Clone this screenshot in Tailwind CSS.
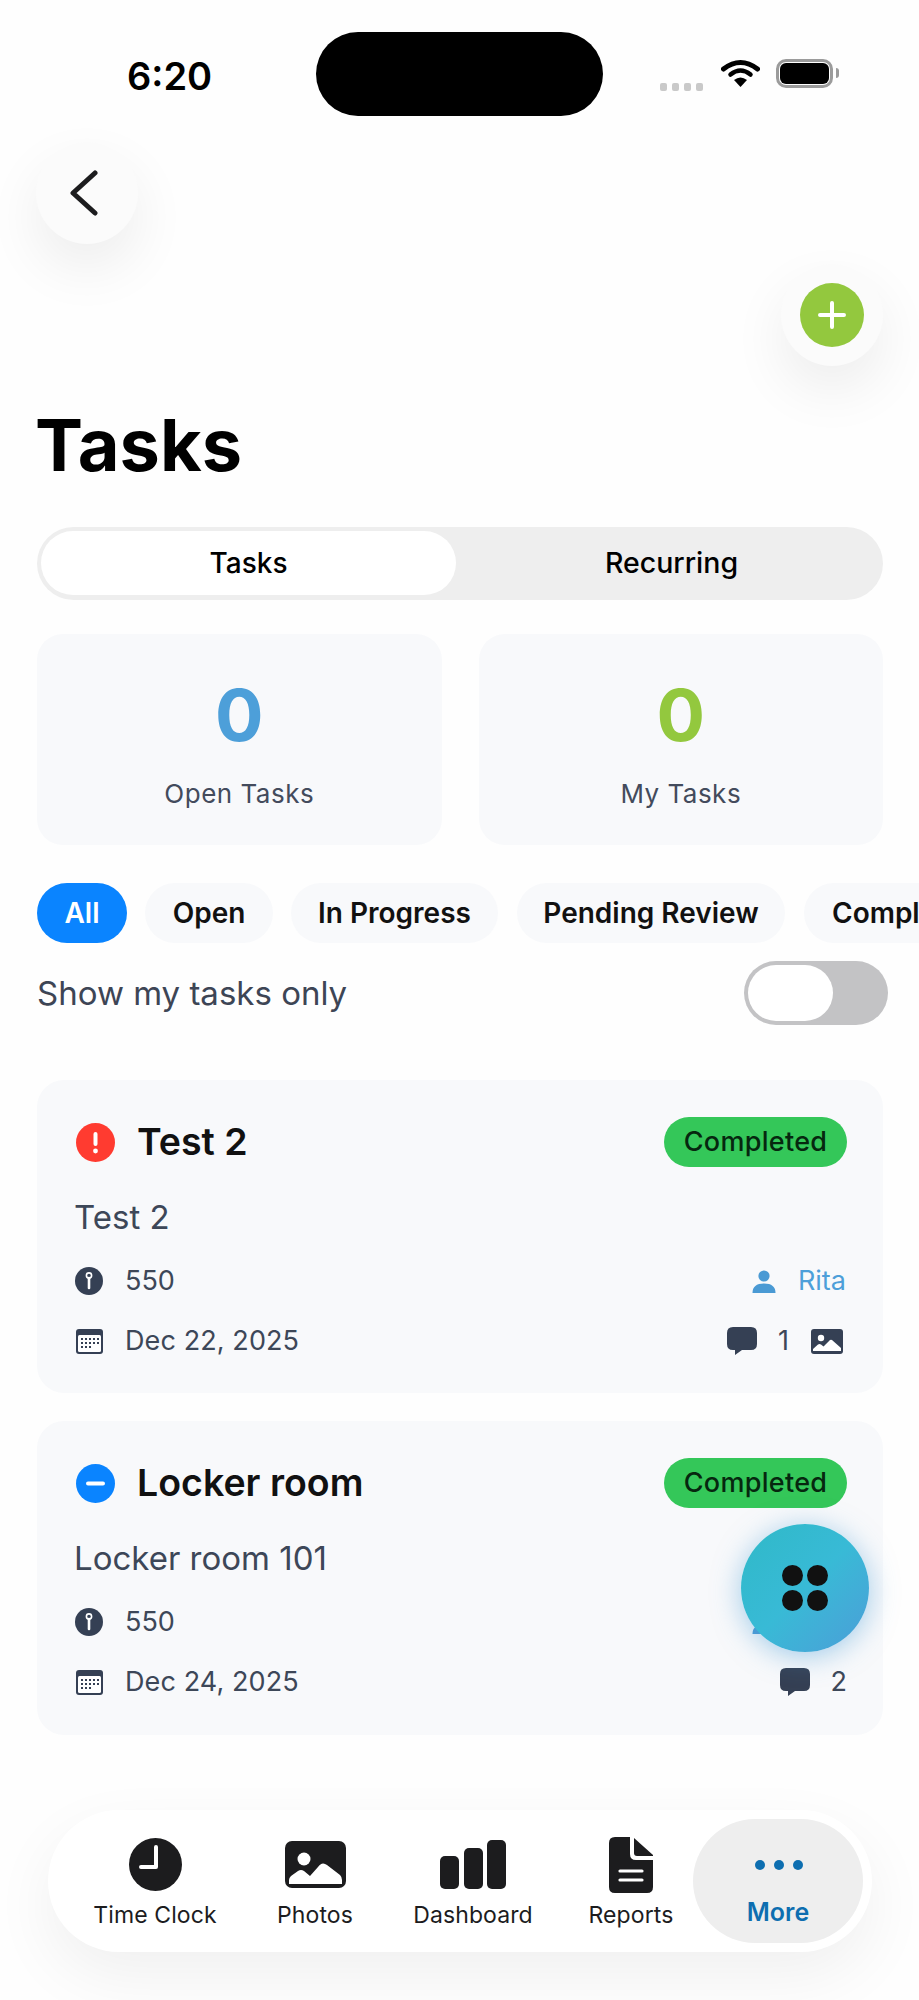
<!DOCTYPE html>
<html>
<head>
<meta charset="utf-8">
<script src="https://cdn.jsdelivr.net/npm/@tailwindcss/browser@4"></script>
</head>
<body class="bg-[#fefefe] font-['Inter','Liberation_Sans',sans-serif]">
<div class="relative w-[919px] h-[2000px] overflow-hidden">
  <!-- status bar -->
  <div class="flex items-center h-[84px] mt-[32px] pt-0">
    <div class="w-[316px] pl-[127px] text-[38px] font-semibold leading-none text-black pt-[3px]">6:20</div>
    <div class="w-[287px] h-[84px] rounded-[42px] bg-black"></div>
    <div class="flex items-center ml-[57px]">
      <div class="flex gap-[5px] mt-[26px]">
        <span class="w-[7px] h-[8px] rounded-[2px] bg-[#c9c9c9]"></span>
        <span class="w-[7px] h-[8px] rounded-[2px] bg-[#c9c9c9]"></span>
        <span class="w-[7px] h-[8px] rounded-[2px] bg-[#c9c9c9]"></span>
        <span class="w-[7px] h-[8px] rounded-[2px] bg-[#c9c9c9]"></span>
      </div>
      <svg class="ml-[18px] -mt-[2px]" width="39" height="28" viewBox="0 0 38 28" fill="none">
        <path d="M2 10 Q19 -3 36 10" stroke="#000" stroke-width="5" stroke-linecap="round"/>
        <path d="M9 15.5 Q19 7.5 29 15.5" stroke="#000" stroke-width="4.5" stroke-linecap="round"/>
        <path d="M12.5 21 Q19 16 25.5 21 L19 28Z" fill="#000"/>
      </svg>
      <div class="ml-[16px] -mt-[2px] w-[57px] h-[29px] rounded-[10px] border-[3px] border-[#9b9b9b] p-[1px] bg-white">
        <div class="w-full h-full rounded-[6px] bg-black"></div>
      </div>
      <span class="ml-[3px] -mt-[2px] w-[3px] h-[10px] rounded-r-[3px] bg-[#9b9b9b]"></span>
    </div>
  </div>

  <!-- back -->
  <div class="ml-[36px] mt-[26px] w-[102px] h-[102px] rounded-full bg-[#fbfbfb] shadow-[0_24px_56px_rgba(0,0,0,0.07)] flex items-center justify-center">
    <svg class="-ml-[6px]" width="28" height="46" viewBox="0 0 28 46" fill="none"><path d="M25 3 L3 23 L25 43" stroke="#1c1c1e" stroke-width="5" stroke-linecap="round" stroke-linejoin="round"/></svg>
  </div>

  <!-- plus -->
  <div class="flex justify-end mt-[20px] pr-[36px]">
    <div class="w-[102px] h-[102px] rounded-full bg-[#fbfbfb] shadow-[0_24px_56px_rgba(0,0,0,0.07)] flex items-center justify-center">
      <div class="w-[64px] h-[64px] rounded-full bg-[#93c83e] flex items-center justify-center">
        <svg width="32" height="32" viewBox="0 0 32 32" fill="none"><path d="M16 4 V28 M4 16 H28" stroke="#fff" stroke-width="4" stroke-linecap="round"/></svg>
      </div>
    </div>
  </div>

  <div class="pl-[37px] pr-[36px]">
    <h1 class="mt-[39px] -ml-[2px] text-[72px] leading-[80px] font-bold text-black">Tasks</h1>

    <!-- segment -->
    <div class="mt-[42px] h-[73px] rounded-[37px] bg-[#eeeeee] flex pt-[4px] pb-[5px] pl-[4px]">
      <div class="w-[415px] rounded-[32px] bg-white flex items-center justify-center text-[28px] font-medium text-black">Tasks</div>
      <div class="flex-1 flex items-center justify-center text-[28.5px] font-medium text-black pl-[4px]">Recurring</div>
    </div>

    <!-- stats -->
    <div class="mt-[34px] grid grid-cols-2 gap-[37px]">
      <div class="h-[211px] rounded-[26px] bg-[#f8f9fb] flex flex-col items-center pt-[43px]">
        <div class="text-[72px] leading-[76px] font-bold text-[#4d9fd9]">0</div>
        <div class="mt-[23px] text-[26px] leading-[36px] text-[#434b5c] tracking-[0.5px]">Open Tasks</div>
      </div>
      <div class="h-[211px] rounded-[26px] bg-[#f8f9fb] flex flex-col items-center pt-[43px]">
        <div class="text-[72px] leading-[76px] font-bold text-[#93c83e]">0</div>
        <div class="mt-[23px] text-[26px] leading-[36px] text-[#434b5c] tracking-[0.5px]">My Tasks</div>
      </div>
    </div>

    <!-- chips -->
    <div class="mt-[38px] flex gap-[18px] whitespace-nowrap w-[960px]">
      <div class="h-[60px] w-[90px] rounded-[30px] bg-[#0a84ff] text-white text-[28px] font-semibold flex items-center justify-center">All</div>
      <div class="h-[60px] w-[128px] rounded-[30px] bg-[#f8f9fb] text-[#111] text-[28px] font-semibold flex items-center justify-center">Open</div>
      <div class="h-[60px] w-[207px] rounded-[30px] bg-[#f8f9fb] text-[#111] text-[28px] font-semibold flex items-center justify-center">In Progress</div>
      <div class="ml-px h-[60px] w-[268px] rounded-[30px] bg-[#f8f9fb] text-[#111] text-[28px] font-semibold flex items-center justify-center">Pending Review</div>
      <div class="ml-px h-[60px] w-[190px] rounded-[30px] bg-[#f8f9fb] text-[#111] text-[28px] font-semibold flex items-center pl-[28px]">Completed</div>
    </div>

    <!-- toggle row -->
    <div class="mt-[18px] -mr-[5px] flex items-center justify-between h-[64px]">
      <span class="text-[33px] text-[#3d4555] mt-px">Show my tasks only</span>
      <div class="w-[144px] h-[64px] rounded-[32px] bg-[#c3c3c5] pl-[4px] py-[4px]">
        <div class="w-[85px] h-[56px] rounded-[28px] bg-white"></div>
      </div>
    </div>

    <!-- card 1 -->
    <div class="mt-[55px] h-[313px] rounded-[27px] bg-[#f8f9fb] pl-[38px] pr-[36px] pt-[37px]">
      <div class="flex items-center justify-between h-[50px]">
        <div class="flex items-center">
          <svg width="39" height="39" viewBox="0 0 39 39" class="ml-px"><circle cx="19.5" cy="19.5" r="19.5" fill="#ff3b30"/><rect x="17.5" y="9" width="4" height="14" rx="2" fill="#fff"/><circle cx="19.5" cy="28" r="2.4" fill="#fff"/></svg>
          <span class="ml-[22px] text-[37.5px] font-semibold text-[#111] mt-px">Test 2</span>
        </div>
        <div class="w-[183px] h-[50px] rounded-[25px] bg-[#34c759] flex items-center justify-center text-[27px] font-medium text-[#06270f] tracking-[0.3px]">Completed</div>
      </div>
      <div class="mt-[30px] -ml-px text-[33px] leading-[40px] text-[#3d4758]">Test 2</div>
      <div class="mt-[28px] flex items-center justify-between h-[32px]">
        <div class="flex items-center">
          <svg width="28" height="28" viewBox="0 0 28 28"><circle cx="14" cy="14" r="14" fill="#354054"/><circle cx="14" cy="8.5" r="2.6" fill="none" stroke="#fff" stroke-width="1.6"/><path d="M14 11 V21" stroke="#fff" stroke-width="2.6" stroke-linecap="round"/></svg>
          <span class="ml-[22px] text-[27px] text-[#3d4758]">550</span>
        </div>
        <div class="flex items-center mr-px">
          <svg width="24" height="24" viewBox="0 0 24 24"><circle cx="12" cy="7" r="5.6" fill="#4a9ad4"/><path d="M0.5 24 Q0.5 14.5 12 14.5 Q23.5 14.5 23.5 24Z" fill="#4a9ad4"/></svg>
          <span class="ml-[22px] text-[27px] text-[#4d9fd9]">Rita</span>
        </div>
      </div>
      <div class="mt-[28px] flex items-center justify-between h-[32px]">
        <div class="flex items-center">
          <svg width="27" height="25" viewBox="0 0 27 25" class="ml-px"><rect width="27" height="25" rx="3" fill="#354054"/><rect x="2" y="6" width="23" height="17" rx="1.5" fill="#fff"/><g fill="#354054"><rect x="5" y="9" width="2" height="2"/><rect x="9" y="9" width="2" height="2"/><rect x="13" y="9" width="2" height="2"/><rect x="17" y="9" width="2" height="2"/><rect x="21" y="9" width="2" height="2"/><rect x="5" y="13" width="2" height="2"/><rect x="9" y="13" width="2" height="2"/><rect x="13" y="13" width="2" height="2"/><rect x="17" y="13" width="2" height="2"/><rect x="21" y="13" width="2" height="2"/><rect x="5" y="17" width="2" height="2"/><rect x="9" y="17" width="2" height="2"/><rect x="13" y="17" width="2" height="2"/></g></svg>
          <span class="ml-[22px] text-[27px] text-[#3d4758] tracking-[0.1px]">Dec 22, 2025</span>
        </div>
        <div class="flex items-center">
          <svg width="30" height="28" viewBox="0 0 30 28"><path d="M6 0 H24 Q30 0 30 6 V17 Q30 23 24 23 H15 L8 28 V23 H6 Q0 23 0 17 V6 Q0 0 6 0Z" fill="#354054"/></svg>
          <span class="ml-[21px] text-[27px] text-[#3d4758]">1</span>
          <svg width="32" height="25" viewBox="0 0 32 25" class="ml-[22px] mr-[4px]"><rect width="32" height="25" rx="3" fill="#354054"/><circle cx="10" cy="9" r="3.2" fill="#fff"/><path d="M2 20 L7 15.5 Q8.5 14.5 10 15.5 L12.5 17.5 L19 11 Q20 10.5 21 11 L30 19 V22 H2Z" fill="#fff"/></svg>
        </div>
      </div>
    </div>

    <!-- card 2 -->
    <div class="mt-[28px] h-[314px] rounded-[27px] bg-[#f8f9fb] pl-[38px] pr-[36px] pt-[37px]">
      <div class="flex items-center justify-between h-[50px]">
        <div class="flex items-center">
          <svg width="39" height="39" viewBox="0 0 39 39" class="ml-px"><circle cx="19.5" cy="19.5" r="19.5" fill="#0a84ff"/><rect x="10" y="17.5" width="19" height="4" rx="2" fill="#fff"/></svg>
          <span class="ml-[22px] text-[37.5px] font-semibold text-[#111] mt-px">Locker room</span>
        </div>
        <div class="w-[183px] h-[50px] rounded-[25px] bg-[#34c759] flex items-center justify-center text-[27px] font-medium text-[#06270f] tracking-[0.3px]">Completed</div>
      </div>
      <div class="mt-[30px] -ml-px text-[33px] leading-[40px] text-[#3d4758]">Locker room 101</div>
      <div class="mt-[28px] flex items-center justify-between h-[32px]">
        <div class="flex items-center">
          <svg width="28" height="28" viewBox="0 0 28 28"><circle cx="14" cy="14" r="14" fill="#354054"/><circle cx="14" cy="8.5" r="2.6" fill="none" stroke="#fff" stroke-width="1.6"/><path d="M14 11 V21" stroke="#fff" stroke-width="2.6" stroke-linecap="round"/></svg>
          <span class="ml-[22px] text-[27px] text-[#3d4758]">550</span>
        </div>
        <div class="w-[95px]">
          <svg width="24" height="24" viewBox="0 0 24 24"><circle cx="12" cy="7" r="5.6" fill="#4a9ad4"/><path d="M0.5 24 Q0.5 14.5 12 14.5 Q23.5 14.5 23.5 24Z" fill="#4a9ad4"/></svg>
        </div>
      </div>
      <div class="mt-[28px] flex items-center justify-between h-[32px]">
        <div class="flex items-center">
          <svg width="27" height="25" viewBox="0 0 27 25" class="ml-px"><rect width="27" height="25" rx="3" fill="#354054"/><rect x="2" y="6" width="23" height="17" rx="1.5" fill="#fff"/><g fill="#354054"><rect x="5" y="9" width="2" height="2"/><rect x="9" y="9" width="2" height="2"/><rect x="13" y="9" width="2" height="2"/><rect x="17" y="9" width="2" height="2"/><rect x="21" y="9" width="2" height="2"/><rect x="5" y="13" width="2" height="2"/><rect x="9" y="13" width="2" height="2"/><rect x="13" y="13" width="2" height="2"/><rect x="17" y="13" width="2" height="2"/><rect x="21" y="13" width="2" height="2"/><rect x="5" y="17" width="2" height="2"/><rect x="9" y="17" width="2" height="2"/><rect x="13" y="17" width="2" height="2"/></g></svg>
          <span class="ml-[22px] text-[27px] text-[#3d4758] tracking-[0.1px]">Dec 24, 2025</span>
        </div>
        <div class="flex items-center">
          <svg width="30" height="28" viewBox="0 0 30 28"><path d="M6 0 H24 Q30 0 30 6 V17 Q30 23 24 23 H15 L8 28 V23 H6 Q0 23 0 17 V6 Q0 0 6 0Z" fill="#354054"/></svg>
          <span class="ml-[21px] text-[27px] text-[#3d4758]">2</span>
        </div>
      </div>
    </div>
  </div>

  <!-- bottom nav -->
  <div class="mt-[75px] ml-[48px] w-[824px] h-[142px] rounded-[71px] bg-white shadow-[0_24px_64px_rgba(0,0,0,0.06)] flex items-start pt-[28px] pl-[36px] pr-[9px] text-[#1c1c1e]">
    <div class="w-[142px] flex flex-col items-center">
      <svg width="53" height="53" viewBox="0 0 53 53"><circle cx="26.5" cy="26.5" r="26.5" fill="#1c1c1e"/><path d="M27 9 V29 H12" fill="none" stroke="#fff" stroke-width="4" stroke-linejoin="round" stroke-linecap="round"/></svg>
      <span class="mt-[9px] text-[23px] leading-[30px] tracking-[0.1px]">Time Clock</span>
    </div>
    <div class="ml-[18px] w-[142px] flex flex-col items-center">
      <svg class="my-[3px]" width="61" height="47" viewBox="0 0 61 47"><rect width="61" height="47" rx="7" fill="#1c1c1e"/><circle cx="19" cy="18" r="6.5" fill="#fff"/><path d="M4 39 Q4 37 6 35 L13 30 Q16 28 19 30 L25 35 L33 26 Q37 20 42 24 L55 34 Q57 36 57 39 V43 H4Z" fill="#fff"/></svg>
      <span class="mt-[9px] text-[23px] leading-[30px] tracking-[0.1px]">Photos</span>
    </div>
    <div class="ml-[16px] w-[142px] flex flex-col items-center">
      <svg class="my-[2px]" width="66" height="49" viewBox="0 0 66 49"><rect x="0" y="16" width="19" height="33" rx="5" fill="#1c1c1e"/><rect x="24" y="8" width="19" height="41" rx="5" fill="#1c1c1e"/><rect x="47" y="0" width="19" height="49" rx="5" fill="#1c1c1e"/></svg>
      <span class="mt-[9px] text-[23px] leading-[30px] tracking-[0.1px]">Dashboard</span>
    </div>
    <div class="ml-[25px] w-[124px] flex flex-col items-center">
      <svg width="44" height="56" viewBox="0 0 44 56" class="-mt-[1px]"><path d="M6 0 H21 V17 Q21 23 27 23 H44 V50 Q44 56 38 56 H6 Q0 56 0 50 V6 Q0 0 6 0Z" fill="#1c1c1e"/><path d="M25 1 L44 18 V19 H28 Q25 19 25 16Z" fill="#1c1c1e"/><path d="M11 34 H33 M11 43 H33" stroke="#fff" stroke-width="3.2" stroke-linecap="round"/></svg>
      <span class="mt-[7px] text-[23px] leading-[30px] tracking-[0.1px]">Reports</span>
    </div>
    <div class="-mt-[19px] w-[170px] h-[124px] rounded-[62px] bg-[#eeeeee] flex flex-col items-center pt-[41px]">
      <div class="flex gap-[9px] ml-[2px]">
        <span class="w-[10px] h-[10px] rounded-full bg-[#0d6eb0]"></span>
        <span class="w-[10px] h-[10px] rounded-full bg-[#0d6eb0]"></span>
        <span class="w-[10px] h-[10px] rounded-full bg-[#0d6eb0]"></span>
      </div>
      <span class="mt-[26px] text-[25px] leading-[32px] font-semibold text-[#0d6eb0]">More</span>
    </div>
  </div>

  <!-- floating action button -->
  <div class="absolute left-[741px] top-[1524px] w-[128px] h-[128px] rounded-full bg-gradient-to-br from-[#2fb9c8] via-[#38bad6] to-[#4a9dd8] shadow-[0_4px_28px_rgba(74,157,216,0.5)] grid grid-cols-[21px_21px] gap-[4px] place-content-center justify-items-center">
    <span class="w-[21px] h-[21px] rounded-full bg-[#111]"></span>
    <span class="w-[21px] h-[21px] rounded-full bg-[#111]"></span>
    <span class="w-[21px] h-[21px] rounded-full bg-[#111]"></span>
    <span class="w-[21px] h-[21px] rounded-full bg-[#111]"></span>
  </div>
</div>
</body>
</html>
